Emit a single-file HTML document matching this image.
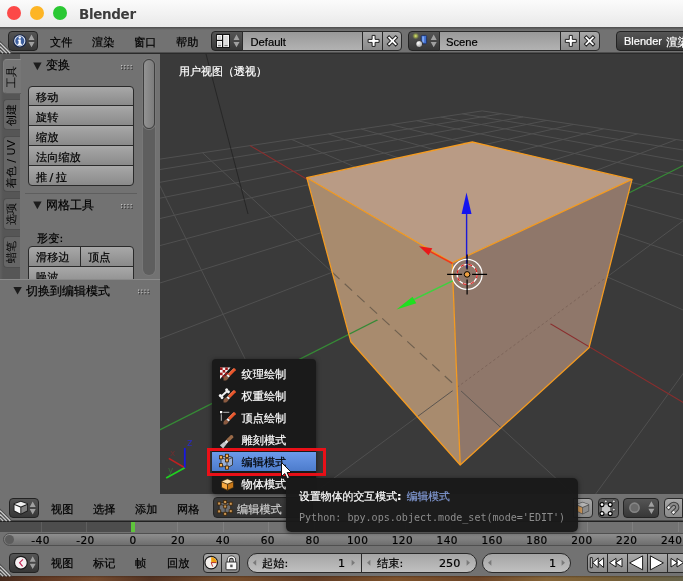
<!DOCTYPE html>
<html><head><meta charset="utf-8">
<style>
html,body{margin:0;padding:0;}
body{will-change:transform;}
body{width:683px;height:581px;overflow:hidden;position:relative;background:#727272;
 font-family:"DejaVu Sans","WenQuanYi Zen Hei","Noto Sans CJK SC",sans-serif;font-size:11px;color:#000;}
.abs,.abs *{position:absolute;}
#title{left:0;top:0;width:683px;height:27px;background:linear-gradient(#fbfbfb,#f2f2f2 50%,#e8e8e8);z-index:1;}
#title .c{top:6px;width:14px;height:14px;border-radius:50%;}
#title .t{left:79px;top:4.600px;margin-top:0;font-size:13.500px;letter-spacing:-0.350px;-webkit-text-stroke:0;line-height:18px;font-weight:bold;color:#3c3c3c;font-family:"DejaVu Sans","Liberation Sans",sans-serif;white-space:nowrap;}
.t{white-space:nowrap;line-height:14px;height:14px;font-size:11.200px;margin-top:0.600px;-webkit-text-stroke:0.200px;}
.w{color:#fff;}
.b{box-sizing:border-box;border:1px solid #2a2a2a;background:linear-gradient(#a8a8a8,#8a8a8a);}
.d{box-sizing:border-box;border:1px solid #232323;background:linear-gradient(#555,#373737);}
.f{box-sizing:border-box;border:1px solid #2a2a2a;background:linear-gradient(#999,#b2b2b2);}
.n{box-sizing:border-box;border:1px solid #2a2a2a;background:linear-gradient(#a5a5a5,#c0c0c0);border-radius:10px;}
#hdr{left:0;top:26px;width:683px;height:28px;background:linear-gradient(#4a4a4a 1px,#727272 4px,#727272 26px,#2a2a2a 27px);}
#view{left:160px;top:54px;width:523px;height:441px;background:#3a3a3a;overflow:hidden;}
#shelf{left:0;top:54px;width:160px;height:441px;background:#727272;overflow:hidden;}
#vhdr{left:0;top:494px;width:683px;height:28px;background:linear-gradient(#727272 26px,#222 27px);}
#tl{left:0;top:522px;width:683px;height:25px;background:#727272;overflow:hidden;}
#thdr{left:0;top:547px;width:683px;height:29px;background:#727272;}
#wood{left:0;top:576px;width:683px;height:5px;background:linear-gradient(rgba(40,25,15,0.350),rgba(0,0,0,0) 2px),linear-gradient(90deg,#45291c 0,#613924 6%,#744a2e 14%,#543322 22%,#764d2b 34%,#623d25 46%,#7e522b 58%,#6e4628 70%,#866538 80%,#766038 90%,#67634a 100%);}
.p12{font-size:12px;}
.tab{left:3px;width:17px;border-radius:4px 0 0 4px;background:#666;border:1px solid #4e4e4e;border-right:none;box-sizing:border-box;}
.tabt{transform:rotate(-90deg);transform-origin:0 0;font-size:11px;line-height:14px;height:14px;white-space:nowrap;text-align:center;}
</style></head><body>
<div id="title" class="abs">
 <div class="c" style="left:7px;background:#fc4948;"></div>
 <div class="c" style="left:30px;background:#fdb525;"></div>
 <div class="c" style="left:53px;background:#2ac833;"></div>
 <div class="t">Blender</div>
</div>

<div id="hdr" class="abs">
 <div class="d" style="left:8px;top:5px;width:30px;height:20px;border-radius:4px;"></div>
 <div class="t" style="left:50px;top:9px;">文件</div>
 <div class="t" style="left:92px;top:9px;">渲染</div>
 <div class="t" style="left:134px;top:9px;">窗口</div>
 <div class="t" style="left:176px;top:9px;">帮助</div>
 <div class="d" style="left:211px;top:5px;width:32px;height:20px;border-radius:4px 0 0 4px;"></div>
 <div class="f" style="left:242px;top:5px;width:121px;height:20px;"></div>
 <div class="t" style="left:250.500px;top:8.300px;font-size:11.200px;font-family:'Liberation Sans','WenQuanYi Zen Hei',sans-serif;">Default</div>
 <div class="b" style="left:362px;top:5px;width:21px;height:20px;"></div>
 <div class="b" style="left:382px;top:5px;width:20px;height:20px;border-radius:0 4px 4px 0;"></div>
 <div class="d" style="left:408px;top:5px;width:32px;height:20px;border-radius:4px 0 0 4px;"></div>
 <div class="f" style="left:439px;top:5px;width:122px;height:20px;"></div>
 <div class="t" style="left:446px;top:8.300px;font-size:11.200px;font-family:'Liberation Sans','WenQuanYi Zen Hei',sans-serif;">Scene</div>
 <div class="b" style="left:560px;top:5px;width:20px;height:20px;"></div>
 <div class="b" style="left:579px;top:5px;width:21px;height:20px;border-radius:0 4px 4px 0;"></div>
 <div class="d" style="left:616px;top:5px;width:80px;height:20px;border-radius:4px;"></div>
 <div class="t w" style="left:624px;top:8.200px;"><span style="position:relative;top:-0.500px;margin-right:1.200px;font-size:11px;font-family:'Liberation Sans','WenQuanYi Zen Hei',sans-serif;">Blender </span>渲染</div>
</div>

<div id="view" class="abs">
 <svg width="523" height="441" viewBox="160 54 523 441" style="left:0;top:0;">
<path d="M693.0 142.0L482.2 110.9M693.0 151.6L462.4 113.9M693.0 163.3L440.6 117.1M693.0 178.1L416.8 120.7M693.0 197.2L390.4 124.6M693.0 222.9L361.1 129.0M693.0 359.9L587.7 505.0M693.0 259.1L328.4 133.9M693.0 213.5L297.5 505.0M693.0 314.3L291.6 139.4M676.5 139.5L150.0 342.5M584.9 505.0L202.5 152.8M637.6 133.8L150.0 286.1M316.9 505.0L150.0 165.6M603.6 128.8L150.0 248.2M573.6 124.4L150.0 220.8M546.9 120.4L150.0 200.2M523.1 116.9L150.0 184.1M501.6 113.7L150.0 171.2M482.2 110.9L150.0 160.6" stroke="#505050" stroke-width="1" fill="none"/>
<path d="M693.0 408.3L250.0 145.6" stroke="#8a2e2e" stroke-width="1.100" fill="none"/><path d="M693.0 160.5L150.0 434.8" stroke="#368a36" stroke-width="1.200" fill="none"/>
<path d="M206 54L248 214" stroke="#272727" stroke-width="1" fill="none"/>
<polygon points="306.8,177.7 472.3,142.0 632.0,179.4 452.2,262.8" fill="#b99b85"/>
<polygon points="306.8,177.7 452.2,262.8 460.2,465.0 350.9,341.8" fill="#a88b6e"/>
<polygon points="452.2,262.8 632.0,179.4 589.0,347.8 460.2,465.0" fill="#8f776a"/>
<mask id="mk" maskUnits="userSpaceOnUse" x="160" y="54" width="523" height="441"><polygon points="306.8,177.7 472.3,142.0 632.0,179.4 589.0,347.8 460.2,465.0 350.9,341.8" fill="#fff"/><polygon points="306.8,177.7 472.3,142.0 632.0,179.4 607.1,276.8 457.1,387.3 332.2,272.3" fill="#000"/><polygon points="326.9,272.2 472.6,216.5 612.8,276.9 456.5,394.3" fill="#000"/></mask>
<g mask="url(#mk)"><path d="M693.0 142.0L482.2 110.9M693.0 151.6L462.4 113.9M693.0 163.3L440.6 117.1M693.0 178.1L416.8 120.7M693.0 197.2L390.4 124.6M693.0 222.9L361.1 129.0M693.0 359.9L587.7 505.0M693.0 259.1L328.4 133.9M693.0 213.5L297.5 505.0M693.0 314.3L291.6 139.4M676.5 139.5L150.0 342.5M584.9 505.0L202.5 152.8M637.6 133.8L150.0 286.1M316.9 505.0L150.0 165.6M603.6 128.8L150.0 248.2M573.6 124.4L150.0 220.8M546.9 120.4L150.0 200.2M523.1 116.9L150.0 184.1M501.6 113.7L150.0 171.2M482.2 110.9L150.0 160.6" stroke="#5b5550" stroke-width="1" fill="none"/><path d="M693.0 408.3L250.0 145.6" stroke="#8a2e2e" stroke-width="1.100" fill="none"/><path d="M693.0 160.5L150.0 434.8" stroke="#368a36" stroke-width="1.200" fill="none"/></g>
<path d="M332.2 272.3L457.1 387.3" stroke="#6f604f" stroke-width="1.200" stroke-dasharray="10 7" fill="none"/>
<path d="M457.1 387.3L607.1 276.8" stroke="#7c6459" stroke-width="1" stroke-dasharray="2.500 2.500" fill="none"/>
<g stroke="#f49b21" stroke-width="1.3" fill="none" stroke-linejoin="round"><polygon points="306.8,177.7 472.3,142.0 632.0,179.4 452.2,262.8"/><polyline points="306.8,177.7 350.9,341.8 460.2,465.0 589.0,347.8 632.0,179.4"/><line x1="452.2" y1="262.8" x2="460.2" y2="465.0"/></g>
<line x1="453.1" y1="280.6" x2="414" y2="299.5" stroke="#3fd13f" stroke-width="1.4"/>
<polygon points="396.5,309.6 412.5,296.8 416.3,303.2" fill="#1fe01f"/>
<line x1="452.5" y1="263.5" x2="430.3" y2="251.6" stroke="#f0381a" stroke-width="1.5"/>
<polygon points="419,246.2 432.3,248.3 428.6,255.2" fill="#e91818"/>
<line x1="466.6" y1="268.4" x2="466.6" y2="213" stroke="#1a1ad8" stroke-width="1.4"/>
<polygon points="466.5,192.5 471.5,214 461.6,214" fill="#1414f0"/>
<circle cx="467.1" cy="274.4" r="15" fill="none" stroke="#fff" stroke-width="1.2"/>
<circle cx="467.1" cy="274.4" r="10" fill="none" stroke="#fff" stroke-width="1.2"/>
<circle cx="467.1" cy="274.4" r="10" fill="none" stroke="#e02020" stroke-width="1.2" stroke-dasharray="4 4"/>
<path d="M462.1 274.4h-15M472.1 274.4h15M467.1 269.4v-15M467.1 279.4v15" stroke="#000" stroke-width="1.2"/>
<circle cx="467.1" cy="274.4" r="2.8" fill="#f0a040" stroke="#000" stroke-width="1"/>
<path d="M184.8 467.7L168.8 458.4" stroke="#c02020" stroke-width="1.6"/>
<path d="M184.8 467.7L166.2 478" stroke="#20d020" stroke-width="1.8"/>
<path d="M184.8 467.7V448" stroke="#1818e0" stroke-width="1.8"/>
<text x="187" y="446" font-size="10" fill="#2a2ac0" font-family="DejaVu Sans">z</text>
<text x="170" y="456" font-size="9" fill="#6a3030" font-family="DejaVu Sans">x</text>
<text x="168" y="473" font-size="9" fill="#3a6a3a" font-family="DejaVu Sans">y</text>
 </svg>
 <div class="t w" style="left:19px;top:10px;font-size:11px;">用户视图（透视）</div>
</div>

<div id="shelf" class="abs">
 <div style="left:0;top:0;width:20px;height:226px;background:linear-gradient(90deg,#606060,#565656 3px);"></div>
 <div class="tab" style="top:5px;height:35px;background:#767676;border-color:#888 #727272 #5e5e5e #7e7e7e;width:18px;"></div>
 <div class="tab" style="top:45px;height:31px;"></div>
 <div class="tab" style="top:82px;height:56px;"></div>
 <div class="tab" style="top:144px;height:32px;"></div>
 <div class="tab" style="top:182px;height:32px;"></div>
 <div class="tabt" style="left:5px;top:39px;width:32px;">工具</div>
 <div class="tabt" style="left:5px;top:76px;width:30px;">创建</div>
 <div class="tabt" style="left:5px;top:138px;width:56px;">着色 / UV</div>
 <div class="tabt" style="left:5px;top:176px;width:32px;">选项</div>
 <div class="tabt" style="left:5px;top:214px;width:32px;">蜡笔</div>

 <div class="t p12" style="left:46px;top:3.5px;">变换</div>
 <div class="b" style="left:28px;top:32px;width:106px;height:20px;border-radius:4px 4px 0 0;"></div>
 <div class="b" style="left:28px;top:51px;width:106px;height:21px;"></div>
 <div class="b" style="left:28px;top:71px;width:106px;height:21px;"></div>
 <div class="b" style="left:28px;top:91px;width:106px;height:21px;"></div>
 <div class="b" style="left:28px;top:111px;width:106px;height:20.500px;border-radius:0 0 4px 4px;"></div>
 <div class="t" style="left:36px;top:36.2px;">移动</div>
 <div class="t" style="left:36px;top:56.2px;">旋转</div>
 <div class="t" style="left:36px;top:76.2px;">缩放</div>
 <div class="t" style="left:36px;top:96.2px;">法向缩放</div>
 <div class="t" style="left:36px;top:116.2px;word-spacing:-1.200px;">推 / 拉</div>
 <div style="left:25px;top:139px;width:112px;height:1px;background:#5e5e5e;"></div>
 <div class="t p12" style="left:46px;top:143.5px;">网格工具</div>
 <div class="t" style="left:37px;top:177.2px;">形变:</div>
 <div class="b" style="left:28px;top:192px;width:53px;height:21px;border-radius:4px 0 0 0;"></div>
 <div class="b" style="left:80px;top:192px;width:54px;height:21px;border-radius:0 4px 0 0;"></div>
 <div class="b" style="left:28px;top:212px;width:106px;height:21px;"></div>
 <div class="t" style="left:36px;top:196.2px;">滑移边</div>
 <div class="t" style="left:88px;top:196.2px;">顶点</div>
 <div class="t" style="left:36px;top:216.2px;">噪波</div>
 <div style="left:143px;top:5px;width:12px;height:216px;border-radius:6px;background:#5e5e5e;box-shadow:0 0 0 1px #777;"></div>
 <div style="left:143px;top:5px;width:12px;height:70px;border-radius:6px;background:linear-gradient(90deg,#929292,#7c7c7c);border:1px solid #3e3e3e;box-sizing:border-box;box-shadow:0 0 0 1px #787878;"></div>
 <div style="left:0;top:225px;width:160px;height:216px;background:#727272;border-top:1px solid #8a8a8a;"></div>
 <div class="t p12" style="left:26px;top:229.5px;">切换到编辑模式</div>
</div>

<div id="vhdr" class="abs">
 <div class="d" style="left:9.300px;top:4px;width:29.500px;height:19.500px;border-radius:4px;"></div>
 <div class="t" style="left:51px;top:8px;">视图</div>
 <div class="t" style="left:93px;top:8px;">选择</div>
 <div class="t" style="left:135px;top:8px;">添加</div>
 <div class="t" style="left:177px;top:8px;">网格</div>
 <div class="d" style="left:212.500px;top:2.500px;width:100px;height:21px;border-radius:4px;background:linear-gradient(#3c3c3c,#303030);"></div>
 <div class="t" style="left:237px;top:8px;color:#ccc;">编辑模式</div>
 <div class="b" style="left:573px;top:4px;width:20px;height:20px;border-radius:0 4px 4px 0;"></div>
 <div class="b" style="left:598px;top:4px;width:20.500px;height:19.500px;border-radius:4px;background:linear-gradient(#5a5a5a,#666);"></div>
 <div class="d" style="left:623px;top:4px;width:36px;height:20px;border-radius:4px;"></div>
 <div class="b" style="left:663.500px;top:4px;width:19px;height:19.500px;border-radius:4px 0 0 4px;"></div>
</div>

<div id="tl" class="abs">
 <div style="left:0;top:0;width:131px;height:10px;background:#4d4d4d;"></div>
 <div style="left:-5.0px;top:0;width:1px;height:10px;background:#5e5e5e;"></div>
<div style="left:40.5px;top:0;width:1px;height:10px;background:#5e5e5e;"></div>
<div style="left:86.0px;top:0;width:1px;height:10px;background:#5e5e5e;"></div>
<div style="left:177.0px;top:0;width:1px;height:10px;background:#808080;"></div>
<div style="left:222.5px;top:0;width:1px;height:10px;background:#808080;"></div>
<div style="left:268.0px;top:0;width:1px;height:10px;background:#808080;"></div>
<div style="left:313.5px;top:0;width:1px;height:10px;background:#808080;"></div>
<div style="left:359.0px;top:0;width:1px;height:10px;background:#808080;"></div>
<div style="left:404.5px;top:0;width:1px;height:10px;background:#808080;"></div>
<div style="left:450.0px;top:0;width:1px;height:10px;background:#808080;"></div>
<div style="left:495.5px;top:0;width:1px;height:10px;background:#808080;"></div>
<div style="left:541.0px;top:0;width:1px;height:10px;background:#808080;"></div>
<div style="left:586.5px;top:0;width:1px;height:10px;background:#808080;"></div>
<div style="left:632.0px;top:0;width:1px;height:10px;background:#808080;"></div>
<div style="left:677.5px;top:0;width:1px;height:10px;background:#808080;"></div>
 <div style="left:131px;top:0;width:4px;height:10px;background:#5fc43c;"></div>
 <div style="left:3px;top:11px;width:700px;height:13px;border-radius:7px;background:linear-gradient(#8e8e8e,#6e6e6e);border:1px solid #505050;box-sizing:border-box;"></div><div style="left:5px;top:13px;width:9px;height:9px;border-radius:5px;background:#5c5c5c;"></div>
 <div class="t" style="left:20.6px;top:10px;width:40px;text-align:center;font-size:10.5px;letter-spacing:0.450px;">-40</div>
<div class="t" style="left:65.4px;top:10px;width:40px;text-align:center;font-size:10.5px;letter-spacing:0.450px;">-20</div>
<div class="t" style="left:113.2px;top:10px;width:40px;text-align:center;font-size:10.5px;letter-spacing:0.450px;">0</div>
<div class="t" style="left:158.1px;top:10px;width:40px;text-align:center;font-size:10.5px;letter-spacing:0.450px;">20</div>
<div class="t" style="left:202.9px;top:10px;width:40px;text-align:center;font-size:10.5px;letter-spacing:0.450px;">40</div>
<div class="t" style="left:247.8px;top:10px;width:40px;text-align:center;font-size:10.5px;letter-spacing:0.450px;">60</div>
<div class="t" style="left:292.7px;top:10px;width:40px;text-align:center;font-size:10.5px;letter-spacing:0.450px;">80</div>
<div class="t" style="left:337.6px;top:10px;width:40px;text-align:center;font-size:10.5px;letter-spacing:0.450px;">100</div>
<div class="t" style="left:382.4px;top:10px;width:40px;text-align:center;font-size:10.5px;letter-spacing:0.450px;">120</div>
<div class="t" style="left:427.3px;top:10px;width:40px;text-align:center;font-size:10.5px;letter-spacing:0.450px;">140</div>
<div class="t" style="left:472.2px;top:10px;width:40px;text-align:center;font-size:10.5px;letter-spacing:0.450px;">160</div>
<div class="t" style="left:517.0px;top:10px;width:40px;text-align:center;font-size:10.5px;letter-spacing:0.450px;">180</div>
<div class="t" style="left:561.9px;top:10px;width:40px;text-align:center;font-size:10.5px;letter-spacing:0.450px;">200</div>
<div class="t" style="left:606.8px;top:10px;width:40px;text-align:center;font-size:10.5px;letter-spacing:0.450px;">220</div>
<div class="t" style="left:651.6px;top:10px;width:40px;text-align:center;font-size:10.5px;letter-spacing:0.450px;">240</div>
</div>

<div id="thdr" class="abs">
 <div class="d" style="left:9.300px;top:6px;width:29.500px;height:19.500px;border-radius:4px;"></div>
 <div class="t" style="left:51px;top:9.300px;">视图</div>
 <div class="t" style="left:93px;top:9.300px;">标记</div>
 <div class="t" style="left:135px;top:9.300px;">帧</div>
 <div class="t" style="left:167px;top:9.300px;">回放</div>
 <div class="b" style="left:203px;top:6px;width:19px;height:20px;border-radius:4px 0 0 4px;"></div>
 <div class="b" style="left:221px;top:6px;width:19px;height:20px;border-radius:0 4px 4px 0;"></div>
 <div class="n" style="left:247px;top:6px;width:115px;height:20px;border-radius:10px 0 0 10px;"></div>
 <div class="n" style="left:361px;top:6px;width:116px;height:20px;border-radius:0 10px 10px 0;"></div>
 <div class="t" style="left:262px;top:9.300px;">起始:</div>
 <div class="t" style="left:338px;top:9.300px;">1</div>
 <div class="t" style="left:377px;top:9.300px;">结束:</div>
 <div class="t" style="left:439px;top:9.300px;">250</div>
 <div class="n" style="left:482px;top:6px;width:89px;height:20px;"></div>
 <div class="t" style="left:549px;top:9.300px;">1</div>
 <div class="b" style="left:587px;top:6px;width:21px;height:20px;border-radius:4px 0 0 4px;"></div>
 <div class="b" style="left:607px;top:6px;width:21px;height:20px;"></div>
 <div class="b" style="left:627px;top:6px;width:21px;height:20px;"></div>
 <div class="b" style="left:647px;top:6px;width:21px;height:20px;"></div>
 <div class="b" style="left:667px;top:6px;width:21px;height:20px;"></div>
</div>
<div id="wood" class="abs"></div>

<svg class="abs" style="left:0;top:0;" width="683" height="581"><circle cx="19.8" cy="40.9" r="6.7" fill="#16264a"/><circle cx="19.8" cy="40.9" r="5.6" fill="#e8eef8"/><circle cx="19.8" cy="40.9" r="4.6" fill="#3d5f9e"/>
<path d="M18.4 39.6h2.4v4.2h1v1.2h-4.2v-1.2h1v-3h-1z" fill="#fff"/><circle cx="19.8" cy="37.6" r="1.2" fill="#fff"/>
<path d="M31.5 34.5l3 5.4h-6zM31.5 47.3l3 -5.4h-6z" fill="#a0a0a0"/>
<rect x="216.2" y="33.9" width="13.8" height="14" fill="#111"/>
<rect x="217" y="35" width="5" height="4.8" fill="#f4f4f4"/><rect x="217" y="41" width="5" height="6" fill="#f4f4f4"/><rect x="223.2" y="35" width="5.8" height="12" fill="#f4f4f4"/>
<rect x="218" y="36" width="3" height="3" fill="#d0d0d0"/><rect x="218" y="42" width="3" height="3" fill="#d8d8d8"/><rect x="224.2" y="36" width="3.8" height="9" fill="#dcdcdc"/><rect x="218" y="45.3" width="3" height="0.9" fill="#555"/><rect x="224.4" y="45.3" width="3.4" height="0.9" fill="#555"/>
<path d="M236.5 34.5l3 5.4h-6zM236.5 47.3l3 -5.4h-6z" fill="#a0a0a0"/>
<path d="M372.1 35.4h3v4h4v3h-4v4h-3v-4h-4v-3h4z" fill="#fff" stroke="#222" stroke-width="1" stroke-linejoin="round"/>
<g transform="rotate(45 392.4 40.9)"><path d="M391.0 34.9h2.800v4.600h4.600v2.800h-4.600v4.600h-2.800v-4.600h-4.600v-2.800h4.600z" fill="#fff" stroke="#222" stroke-width="1" stroke-linejoin="round"/></g>
<path d="M569.3 35.4h3v4h4v3h-4v4h-3v-4h-4v-3h4z" fill="#fff" stroke="#222" stroke-width="1" stroke-linejoin="round"/>
<g transform="rotate(45 589.6 40.9)"><path d="M588.2 34.9h2.800v4.600h4.600v2.800h-4.600v4.600h-2.800v-4.600h-4.600v-2.800h4.600z" fill="#fff" stroke="#222" stroke-width="1" stroke-linejoin="round"/></g>
<defs><radialGradient id="glow"><stop offset="0" stop-color="#e8f070"/><stop offset="0.5" stop-color="#9aa84a" stop-opacity="0.7"/><stop offset="1" stop-color="#4a4a4a" stop-opacity="0"/></radialGradient><radialGradient id="sph" cx="0.35" cy="0.35" r="0.7"><stop offset="0" stop-color="#fff"/><stop offset="1" stop-color="#9a9a9a"/></radialGradient></defs>
<circle cx="415.7" cy="36" r="4" fill="url(#glow)"/>
<rect x="421.2" y="35.4" width="5.4" height="8.4" rx="1" fill="#3f6fd0" stroke="#1c2c5c" stroke-width="0.8"/><rect x="422.2" y="36.4" width="2" height="6" fill="#7fa6ee"/>
<circle cx="419.2" cy="44" r="3.5" fill="url(#sph)" stroke="#222" stroke-width="0.8"/>
<path d="M433.7 34.5l3 5.4h-6zM433.7 47.3l3 -5.4h-6z" fill="#a0a0a0"/>
<path d="M13.600 503.600l7.200-2.800 7.200 2.800v7.600l-7.200 3.600-7.200-3.600z" fill="#1e1e1e"/>
<path d="M14.600 504l6.200-2.300 6.200 2.300-6.200 2.600z" fill="#f0f0f0"/><path d="M14.500 505l5.800 2.400v6.100l-5.800-2.900z" fill="#fafafa"/><path d="M21.300 507.400l5.800-2.400v5.600l-5.800 2.900z" fill="#808080"/>
<path d="M32.7 501.6l3 5.4h-6zM32.7 514.4l3 -5.4h-6z" fill="#a0a0a0"/>
<path d="M576 504.3l6.6-2.6 6.6 2.6v7l-6.6 3.2-6.6-3.2z" fill="#555"/><path d="M576.8 505.4l5.4 2.3v5.8l-5.4-2.7z" fill="#cc9658"/><path d="M583 507.7l5.4-2.3v5.4l-5.4 2.7z" fill="#8c8c8c"/><path d="M576.8 504.6l5.8-2.2 5.8 2.2-5.8 2.4z" fill="#b4b4b4"/>
<circle cx="605.8" cy="501.4" r="1.400" fill="#d8d8d8" stroke="#2a2a2a" stroke-width="0.700"/>
<circle cx="613.8" cy="501.4" r="1.400" fill="#d8d8d8" stroke="#2a2a2a" stroke-width="0.700"/>
<circle cx="613.8" cy="509.6" r="1.400" fill="#d8d8d8" stroke="#2a2a2a" stroke-width="0.700"/>
<rect x="602" y="504.6" width="8.200" height="9" fill="#c4c4c4"/>
<circle cx="602.0" cy="504.6" r="2.0" fill="#fff" stroke="#000" stroke-width="1.100"/>
<circle cx="610.2" cy="504.6" r="2.0" fill="#fff" stroke="#000" stroke-width="1.100"/>
<circle cx="602.0" cy="513.6" r="2.0" fill="#fff" stroke="#000" stroke-width="1.100"/>
<circle cx="610.2" cy="513.6" r="2.0" fill="#fff" stroke="#000" stroke-width="1.100"/>
<circle cx="634.5" cy="507.7" r="4.6" fill="#6a6a6a" stroke="#858585" stroke-width="1.6"/>
<path d="M651.4 501.3l3 5.4h-6zM651.4 514.1l3 -5.4h-6z" fill="#a0a0a0"/>
<g transform="rotate(45 673.5 507.5)"><path d="M668.500 512.500v-5.500a5 5 0 0 1 10 0v5.500h-3.200v-5.500a1.800 1.800 0 0 0 -3.600 0v5.500z" fill="#8a8a8a" stroke="#3c3c3c" stroke-width="1"/><rect x="669" y="509.800" width="2.200" height="2.400" fill="#f4f4f4"/><rect x="675.800" y="509.800" width="2.200" height="2.400" fill="#f4f4f4"/></g>
<circle cx="20.9" cy="562.7" r="6.4" fill="#f6f0f2" stroke="#1a1a1a" stroke-width="1.2"/><path d="M23 559.3l-3.4 3.4 3 3.6" stroke="#c02050" stroke-width="1.1" fill="none"/>
<path d="M32.7 556.3l3 5.4h-6zM32.7 569.1l3 -5.4h-6z" fill="#a0a0a0"/>
<circle cx="211.2" cy="562.6" r="6.3" fill="#f4f0ec" stroke="#1a1a1a" stroke-width="1.2"/><path d="M211.2 562.6v-5.6a5.6 5.6 0 0 1 5.6 5.6z" fill="#f0a010"/><path d="M211.2 562.6h5.2M211.2 562.6l1.5 4" stroke="#b02020" stroke-width="0.9" fill="none"/>
<path d="M228.3 562.5v-2.3a3.1 3.1 0 0 1 6.200 0v2.3" fill="none" stroke="#222" stroke-width="3.2"/><path d="M228.3 562.5v-2.3a3.1 3.1 0 0 1 6.200 0v2.3" fill="none" stroke="#f4f4f4" stroke-width="1.5"/>
<rect x="226" y="562" width="10.8" height="7.8" rx="0.8" fill="#f8f8f8" stroke="#222" stroke-width="0.9"/><rect x="230.200" y="564.6" width="2.400" height="2.6" fill="#555"/>
<path d="M252.8 562.7l3.400 -3v6z" fill="#7a7a7a"/><path d="M355.0 562.7l-3.400 -3v6z" fill="#7a7a7a"/><path d="M367.0 562.7l3.400 -3v6z" fill="#7a7a7a"/><path d="M470.0 562.7l-3.400 -3v6z" fill="#7a7a7a"/><path d="M488.0 562.7l3.400 -3v6z" fill="#7a7a7a"/><path d="M565.0 562.7l-3.400 -3v6z" fill="#7a7a7a"/>
<path d="M590.3 557.600h1.900v10.200h-1.900zM592.6 562.7l5.6 -4.8v9.6zM598.0 562.7l5.6 -4.8v9.6z" fill="#fff" stroke="#1a1a1a" stroke-width="1" stroke-linejoin="round"/>
<path d="M609.5 562.7l6.5 -4.3v8.6zM615.5 562.7l6.5 -4.3v8.6z" fill="#fff" stroke="#1a1a1a" stroke-width="1" stroke-linejoin="round"/>
<path d="M629.6 562.9l13.0 -7.0v14.0z" fill="#fff" stroke="#1a1a1a" stroke-width="1" stroke-linejoin="round"/>
<path d="M663.4 562.9l-13.0 -7.0v14.0z" fill="#fff" stroke="#1a1a1a" stroke-width="1" stroke-linejoin="round"/>
<path d="M677.5 562.7l-6.5 -4.3v8.6zM683.5 562.7l-6.5 -4.3v8.6z" fill="#fff" stroke="#1a1a1a" stroke-width="1" stroke-linejoin="round"/>
<path d="M0 40.7L12.500 53.2H0z" fill="#4a4a4a"/><path d="M0 42.9L10.3 53.2" stroke="#d0d0d0" stroke-width="1.300"/><path d="M0 46.5L6.7 53.2" stroke="#c8c8c8" stroke-width="1.300"/><path d="M0 50.1L3.1 53.2" stroke="#c0c0c0" stroke-width="1.300"/>
<path d="M0 508.5L12.500 521.0H0z" fill="#4a4a4a"/><path d="M0 510.7L10.3 521.0" stroke="#d0d0d0" stroke-width="1.300"/><path d="M0 514.3L6.7 521.0" stroke="#c8c8c8" stroke-width="1.300"/><path d="M0 517.9L3.1 521.0" stroke="#c0c0c0" stroke-width="1.300"/>
<path d="M0 563.7L12.500 576.2H0z" fill="#4a4a4a"/><path d="M0 565.9L10.3 576.2" stroke="#d0d0d0" stroke-width="1.300"/><path d="M0 569.5L6.7 576.2" stroke="#c8c8c8" stroke-width="1.300"/><path d="M0 573.1L3.1 576.2" stroke="#c0c0c0" stroke-width="1.300"/>
<path d="M33.2 62.6h8.400l-4.200 7.600z" fill="#1c1c1c"/><path d="M33.2 201.6h8.400l-4.200 7.600z" fill="#1c1c1c"/><path d="M13.4 287.0h8.400l-4.200 7.600z" fill="#1c1c1c"/>
<rect x="121.0" y="65.0" width="1.200" height="1.200" fill="#c4c4c4"/><rect x="121.9" y="66.1" width="1.200" height="1.200" fill="#333"/><rect x="121.0" y="67.6" width="1.200" height="1.200" fill="#c4c4c4"/><rect x="121.9" y="68.7" width="1.200" height="1.200" fill="#333"/><rect x="124.2" y="65.0" width="1.200" height="1.200" fill="#c4c4c4"/><rect x="125.1" y="66.1" width="1.200" height="1.200" fill="#333"/><rect x="124.2" y="67.6" width="1.200" height="1.200" fill="#c4c4c4"/><rect x="125.1" y="68.7" width="1.200" height="1.200" fill="#333"/><rect x="127.4" y="65.0" width="1.200" height="1.200" fill="#c4c4c4"/><rect x="128.3" y="66.1" width="1.200" height="1.200" fill="#333"/><rect x="127.4" y="67.6" width="1.200" height="1.200" fill="#c4c4c4"/><rect x="128.3" y="68.7" width="1.200" height="1.200" fill="#333"/><rect x="130.6" y="65.0" width="1.200" height="1.200" fill="#c4c4c4"/><rect x="131.5" y="66.1" width="1.200" height="1.200" fill="#333"/><rect x="130.6" y="67.6" width="1.200" height="1.200" fill="#c4c4c4"/><rect x="131.5" y="68.7" width="1.200" height="1.200" fill="#333"/><rect x="121.0" y="204.0" width="1.200" height="1.200" fill="#c4c4c4"/><rect x="121.9" y="205.1" width="1.200" height="1.200" fill="#333"/><rect x="121.0" y="206.6" width="1.200" height="1.200" fill="#c4c4c4"/><rect x="121.9" y="207.7" width="1.200" height="1.200" fill="#333"/><rect x="124.2" y="204.0" width="1.200" height="1.200" fill="#c4c4c4"/><rect x="125.1" y="205.1" width="1.200" height="1.200" fill="#333"/><rect x="124.2" y="206.6" width="1.200" height="1.200" fill="#c4c4c4"/><rect x="125.1" y="207.7" width="1.200" height="1.200" fill="#333"/><rect x="127.4" y="204.0" width="1.200" height="1.200" fill="#c4c4c4"/><rect x="128.3" y="205.1" width="1.200" height="1.200" fill="#333"/><rect x="127.4" y="206.6" width="1.200" height="1.200" fill="#c4c4c4"/><rect x="128.3" y="207.7" width="1.200" height="1.200" fill="#333"/><rect x="130.6" y="204.0" width="1.200" height="1.200" fill="#c4c4c4"/><rect x="131.5" y="205.1" width="1.200" height="1.200" fill="#333"/><rect x="130.6" y="206.6" width="1.200" height="1.200" fill="#c4c4c4"/><rect x="131.5" y="207.7" width="1.200" height="1.200" fill="#333"/><rect x="138.0" y="289.5" width="1.200" height="1.200" fill="#c4c4c4"/><rect x="138.9" y="290.6" width="1.200" height="1.200" fill="#333"/><rect x="138.0" y="292.1" width="1.200" height="1.200" fill="#c4c4c4"/><rect x="138.9" y="293.2" width="1.200" height="1.200" fill="#333"/><rect x="141.2" y="289.5" width="1.200" height="1.200" fill="#c4c4c4"/><rect x="142.1" y="290.6" width="1.200" height="1.200" fill="#333"/><rect x="141.2" y="292.1" width="1.200" height="1.200" fill="#c4c4c4"/><rect x="142.1" y="293.2" width="1.200" height="1.200" fill="#333"/><rect x="144.4" y="289.5" width="1.200" height="1.200" fill="#c4c4c4"/><rect x="145.3" y="290.6" width="1.200" height="1.200" fill="#333"/><rect x="144.4" y="292.1" width="1.200" height="1.200" fill="#c4c4c4"/><rect x="145.3" y="293.2" width="1.200" height="1.200" fill="#333"/><rect x="147.6" y="289.5" width="1.200" height="1.200" fill="#c4c4c4"/><rect x="148.5" y="290.6" width="1.200" height="1.200" fill="#333"/><rect x="147.6" y="292.1" width="1.200" height="1.200" fill="#c4c4c4"/><rect x="148.5" y="293.2" width="1.200" height="1.200" fill="#333"/></svg>
<div id="menu" class="abs" style="left:211.500px;top:358.500px;width:104.500px;height:135px;background:#1a1a1a;border-radius:4px;box-shadow:0 1px 5px rgba(0,0,0,0.550);">
 <div style="left:0px;top:93.500px;width:104px;height:18.500px;background:linear-gradient(#6c9aea,#4d7ccc);"></div>
 <div class="t w" style="left:30px;top:9px;">纹理绘制</div>
 <div class="t w" style="left:30px;top:31px;">权重绘制</div>
 <div class="t w" style="left:30px;top:53px;">顶点绘制</div>
 <div class="t w" style="left:30px;top:75px;">雕刻模式</div>
 <div class="t" style="left:30px;top:97px;color:#000;">编辑模式</div>
 <div class="t w" style="left:30px;top:119px;">物体模式</div>
</div>
<div class="abs" style="left:207px;top:447.500px;width:118.500px;height:28px;border:3.500px solid #ea1018;box-sizing:border-box;"></div>
<svg class="abs" style="left:0;top:0;" width="683" height="581"><path d="M220 367.400h10.500l-10.500 11.500z" fill="#f4f4f4"/>
<rect x="220.0" y="367.4" width="2.600" height="2.600" fill="#a01818"/>
<rect x="225.2" y="367.4" width="2.600" height="2.600" fill="#a01818"/>
<rect x="222.6" y="370.0" width="2.600" height="2.600" fill="#a01818"/>
<rect x="220.0" y="372.6" width="2.600" height="2.600" fill="#a01818"/>
<rect x="225.2" y="372.6" width="2.600" height="2.600" fill="#a01818"/>
<rect x="222.6" y="375.2" width="2.600" height="2.600" fill="#a01818"/>
<clipPath id="tc"><path d="M220 367.400h10.500l-10.500 11.500z"/></clipPath>
<g transform="translate(223.6 380.4) rotate(-45)"><path d="M0 0c1.500 -2.300 3 -2.400 5.500 -1.700v3.400c-2.500 0.700 -4 0.600 -5.500 -1.700z" fill="#8a5a40"/><rect x="5.500" y="-1.500" width="2.200" height="3" fill="#eee"/><path d="M7.700 -1.500h8c1.100 0.500 1.100 2.500 0 3h-8z" fill="#e8552a"/><path d="M7.700 -1.200h8" stroke="#f89070" stroke-width="0.700"/></g>
<g transform="rotate(-42 224.300 393.700)"><rect x="220.300" y="392.700" width="8" height="2" fill="#f4f4f4"/><circle cx="220" cy="392.400" r="1.500" fill="#f4f4f4"/><circle cx="220" cy="395" r="1.500" fill="#f4f4f4"/><circle cx="228.600" cy="392.400" r="1.500" fill="#f4f4f4"/><circle cx="228.600" cy="395" r="1.500" fill="#f4f4f4"/></g>
<g transform="translate(223.6 402.4) rotate(-45)"><path d="M0 0c1.500 -2.300 3 -2.400 5.500 -1.700v3.400c-2.500 0.700 -4 0.600 -5.500 -1.700z" fill="#8a5a40"/><rect x="5.500" y="-1.500" width="2.200" height="3" fill="#eee"/><path d="M7.700 -1.500h8c1.100 0.500 1.100 2.500 0 3h-8z" fill="#e8552a"/><path d="M7.700 -1.200h8" stroke="#f89070" stroke-width="0.700"/></g>
<path d="M221.300 412.300h8M221.300 412.300v8.500" stroke="#b8b8b8" stroke-width="1" fill="none"/><rect x="219.600" y="410.600" width="3.200" height="3.200" fill="#fff" stroke="#000" stroke-width="0.8"/>
<g transform="translate(223.6 424.4) rotate(-45)"><path d="M0 0c1.500 -2.300 3 -2.400 5.500 -1.700v3.400c-2.500 0.700 -4 0.600 -5.500 -1.700z" fill="#8a5a40"/><rect x="5.500" y="-1.500" width="2.200" height="3" fill="#eee"/><path d="M7.700 -1.500h8c1.100 0.500 1.100 2.500 0 3h-8z" fill="#e8552a"/><path d="M7.700 -1.200h8" stroke="#f89070" stroke-width="0.700"/></g>
<g transform="translate(221.500 446.800) rotate(-45)"><path d="M0 -2.300l5.500 0.600v3.400l-5.500 0.600z" fill="#c4c8cc"/><rect x="5.500" y="-1.400" width="3" height="2.800" fill="#e8e8e8"/><path d="M8.500 -1.700h6.500c1.200 0.500 1.200 2.900 0 3.400h-6.500z" fill="#9a6a48"/></g>
<path d="M221 457.500l6-2 5.500 2v7.500l-5.500 2.800-6-2.800z" fill="#c8ccd4" fill-opacity="0.55" stroke="#333" stroke-width="0.9"/><path d="M227 460v7.800M221 457.500l6 2.500 5.500-2.500" stroke="#333" stroke-width="0.8" fill="none"/>
<rect x="219.4" y="455.7" width="3.200" height="3.200" fill="#f8b050" stroke="#3a2000" stroke-width="0.8"/>
<rect x="225.4" y="454.2" width="3.200" height="3.200" fill="#f8b050" stroke="#3a2000" stroke-width="0.8"/>
<rect x="219.4" y="463.6" width="3.200" height="3.200" fill="#f8b050" stroke="#3a2000" stroke-width="0.8"/>
<rect x="225.4" y="466.0" width="3.200" height="3.200" fill="#f8b050" stroke="#3a2000" stroke-width="0.8"/>
<rect x="225.4" y="458.7" width="3.200" height="3.200" fill="#f8b050" stroke="#3a2000" stroke-width="0.8"/>
<path d="M221.200 481.200l6.200-2.700 6.200 2.700v6.500l-6.200 3-6.200-3z" fill="#5a3a10"/><path d="M222 481.500l5.400-2.300 5.400 2.300-5.400 2.300z" fill="#ffe0a8"/><path d="M222 482.500l5 2.100v5l-5-2.400z" fill="#f8a840"/><path d="M228 484.600l5-2.100v4.700l-5 2.400z" fill="#c87818"/>
<g opacity="0.85" transform="translate(-1.800 46.200)"><path d="M221 457.500l6-2 5.500 2v7.500l-5.500 2.800-6-2.800z" fill="#c8ccd4" fill-opacity="0.45" stroke="#222" stroke-width="0.9"/><path d="M227 460v7.800M221 457.500l6 2.500 5.500-2.500" stroke="#222" stroke-width="0.8" fill="none"/>
<rect x="219.5" y="455.8" width="3" height="3" fill="#e8a858" stroke="#3a2000" stroke-width="0.8"/>
<rect x="225.5" y="454.3" width="3" height="3" fill="#e8a858" stroke="#3a2000" stroke-width="0.8"/>
<rect x="219.5" y="463.7" width="3" height="3" fill="#e8a858" stroke="#3a2000" stroke-width="0.8"/>
<rect x="225.5" y="466.1" width="3" height="3" fill="#e8a858" stroke="#3a2000" stroke-width="0.8"/>
<rect x="225.5" y="458.8" width="3" height="3" fill="#e8a858" stroke="#3a2000" stroke-width="0.8"/>
<rect x="231.0" y="456.0" width="3" height="3" fill="#e8a858" stroke="#3a2000" stroke-width="0.8"/>
<rect x="231.0" y="463.5" width="3" height="3" fill="#e8a858" stroke="#3a2000" stroke-width="0.8"/>
</g>
<path d="M281.500 462.500v14l3.300-3 2.400 5.200 2.300-1-2.400-5.200h4.400z" fill="#fff" stroke="#111" stroke-width="1" stroke-linejoin="round"/></svg>
<div id="tip" class="abs" style="left:286px;top:477.500px;width:291.500px;height:54.500px;background:rgba(25,25,25,0.960);border-radius:5px;box-shadow:0 1px 5px rgba(0,0,0,0.500);">
 <div class="t w" style="left:13px;top:12px;font-weight:bold;font-size:10.900px;">设置物体的交互模式: <span style="position:static;color:#8098d2;font-weight:normal;font-size:10.800px;margin-left:1.500px;">编辑模式</span></div>
 <div class="t" style="left:13px;top:33px;color:#8c8c8c;-webkit-text-stroke:0;font-family:'DejaVu Sans Mono','Liberation Mono',monospace;font-size:10.050px;">Python: bpy.ops.object.mode_set(mode='EDIT')</div>
</div>
</body></html>
